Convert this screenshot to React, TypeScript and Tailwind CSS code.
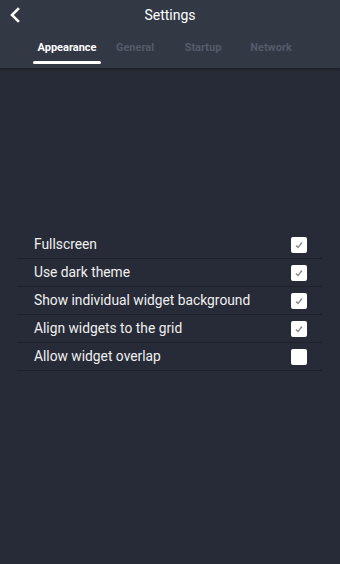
import React from "react";

const rows = [
  { label: "Fullscreen", checked: true },
  { label: "Use dark theme", checked: true },
  { label: "Show individual widget background", checked: true },
  { label: "Align widgets to the grid", checked: true },
  { label: "Allow widget overlap", checked: false },
];

const tabs = ["Appearance", "General", "Startup", "Network"];

export default function App() {
  return (
    <div className="w-[340px] h-[564px] bg-[#272b37] flex flex-col" style={{ fontFamily: "Roboto, 'Noto Sans', sans-serif" }}>
      <div className="bg-[#333845] h-[68px] flex flex-col shadow-[0_1px_3px_rgba(0,0,0,0.4)]">
        <div className="relative h-[30px] flex items-center justify-center">
          <svg className="absolute left-[8px] top-[7px]" width="14" height="16" viewBox="0 0 14 16" fill="none">
            <path d="M10 2 L4 8 L10 14" stroke="white" strokeWidth="2.6" strokeLinecap="square" />
          </svg>
          <span className="text-white text-[14px] leading-none">Settings</span>
        </div>
        <div className="flex pl-[33px] mt-[5px]">
          {tabs.map((t, i) => (
            <div key={t} className="w-[68px] flex flex-col items-center">
              <span className={`text-[11px] font-bold h-[26px] leading-[26px] ${i === 0 ? "text-white" : "text-[#555b69]"}`}>{t}</span>
              {i === 0 ? <div className="w-[68px] h-[3px] bg-white rounded-full" /> : <div className="h-[3px]" />}
            </div>
          ))}
        </div>
      </div>
      <div className="mt-[163px] mx-[17px] w-[305px]">
        {rows.map((r) => (
          <div key={r.label} className="h-[28px] flex items-center justify-between border-b border-[#1d2029] pl-[17px] pr-[15px]">
            <span className="text-[13.8px] text-[#f0f0f0]">{r.label}</span>
            <div className="w-[16px] h-[16px] bg-white rounded-[2px] flex items-center justify-center">
              {r.checked && (
                <svg width="10" height="10" viewBox="0 0 10 10" fill="none">
                  <path d="M2 5.5 L4 7.5 L8 2.5" stroke="#888" strokeWidth="1.3" />
                </svg>
              )}
            </div>
          </div>
        ))}
      </div>
    </div>
  );
}
